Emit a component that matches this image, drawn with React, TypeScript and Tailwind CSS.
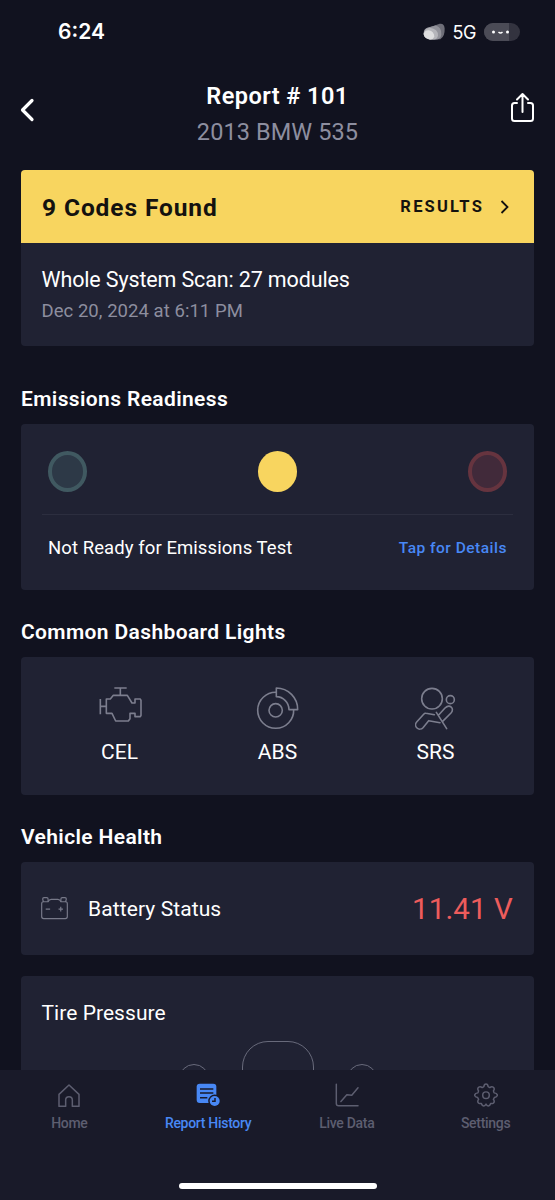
import type { ReactNode } from "react";

type NavItem = {
  label: string;
  icon: ReactNode;
  active?: boolean;
};

function EngineIcon() {
  return (
    <svg viewBox="55 49 132 114" className="h-[38px] w-[44px]" fill="none" stroke="currentColor" strokeWidth="4.8" strokeLinejoin="round">
      <path d="M104 55H141M122 55V76M62 88V134M62 110H80" />
      <path d="M80 88H92L101 77H143L157 100H166V88H182L184 92V137L182 141H166V131H151V147L146 154H108L97 131H80Z" />
    </svg>
  );
}

function BrakeIcon() {
  return (
    <svg viewBox="528 53 129 129" className="size-[43px]" fill="none" stroke="currentColor" strokeWidth="4.8" strokeLinejoin="round">
      <path d="M589 69A54 54 0 1 0 641 121" />
      <circle cx="587" cy="123" r="20" />
      <path d="M589 56A64 64 0 0 1 653 121H627A39 39 0 0 0 589 82Z" />
    </svg>
  );
}

function AirbagIcon() {
  return (
    <svg viewBox="102 51 126 129" className="h-[43px] w-[42px]" fill="none" stroke="currentColor" strokeWidth="4.8" strokeLinecap="round" strokeLinejoin="round">
      <circle cx="153" cy="86" r="31" />
      <circle cx="208" cy="89" r="12" />
      <path d="M160 134L135 130Q131 129 128 133L107 156A12 12 0 0 0 126 173L143 152L177 158" />
      <path d="M166 127L197 176M173 135L192 114C206 101 222 115 210 129L185 154" />
    </svg>
  );
}

function BatteryIcon() {
  return (
    <svg viewBox="34 37 80 68" className="h-[23px] w-[27px]" fill="none" stroke="currentColor" strokeWidth="3.5" strokeLinejoin="round">
      <path d="M41 51Q36 51 36 57V95Q36 101 42 101H106Q112 101 112 95V57Q112 51 107 51" />
      <path d="M41 51L39 43Q39 39 43 39H51Q55 39 55 43V51ZM107 51L109 43Q109 39 105 39H97Q93 39 93 43V51Z" />
      <path d="M55 51Q58 44 64 44H84Q90 44 93 51M48 73H61M86 73H99M92.500 66V80" />
    </svg>
  );
}

function HomeIcon() {
  return (
    <svg viewBox="173 67 72 72" className="size-6" fill="none" stroke="currentColor" strokeWidth="4.5" strokeLinejoin="round">
      <path d="M179 137V101L209 73L239 101V137H219V118A10 10 0 0 0 199 118V137Z" />
    </svg>
  );
}

function ReportIcon() {
  return (
    <svg viewBox="588 67 72 72" className="size-6" fill="none">
      <rect x="590" y="69" width="59" height="58" rx="9" fill="currentColor" />
      <path d="M600 85H640M600 97H640M600 111H622" stroke="#191a29" strokeWidth="4.5" />
      <circle cx="644" cy="121" r="19.500" fill="#191a29" />
      <circle cx="644" cy="121" r="15" fill="currentColor" />
      <path d="M645 112V122H636" stroke="#191a29" strokeWidth="4.5" />
    </svg>
  );
}

function ChartIcon() {
  return (
    <svg viewBox="165 68 73 72" className="size-6" fill="none" stroke="currentColor" strokeWidth="4.5" strokeLinecap="round" strokeLinejoin="round">
      <path d="M169 71V130Q169 137 176 137H235M183 124L201 103L216 105L235 82" />
    </svg>
  );
}

function GearIcon() {
  return (
    <svg viewBox="581 68 73 73" className="size-6" fill="none" stroke="currentColor" strokeWidth="4.5" strokeLinejoin="round">
      <circle cx="617.500" cy="105" r="10" />
      <path d="M611 79Q612 71 617.500 71Q623 71 624 79L629 82Q635 77 640 81Q645 86 640 92L642 98Q652 99 652 105Q652 110 643 112L640 118Q645 125 640 129Q636 131 632 130Q629 138 625 138Q621 138 617.500 132Q614 138 610 138Q606 138 603 130Q599 131 595 129Q590 125 595 118L592 112Q583 110 583 105Q583 99 593 98L595 92Q590 86 595 81Q600 77 606 82Z" />
    </svg>
  );
}

function StatusBar() {
  return (
    <div className="flex h-[63px] items-center justify-between pr-[35px] pl-[58px] text-white">
      <span className="pt-px font-[Inter] text-[21px] font-semibold">6:24</span>
      <div className="flex items-center">
        <svg viewBox="0 0 66 50" className="mr-2 h-[17px] w-[22px]">
          <path d="M2 32Q0 15 20 12L50 2Q64 0 65 16Q66 40 52 48L20 49Q4 46 2 32Z" fill="#6e6e78" />
          <path d="M2 32Q2 14 18 12L38 7Q56 12 55 34Q53 48 42 49H20Q4 46 2 32Z" fill="#92929a" />
          <path d="M2 32Q4 16 20 14Q46 17 45 38Q42 49 34 49H20Q4 46 2 32Z" fill="#b5b5ba" />
          <path d="M2 34Q4 21 17 21Q34 24 34 41Q31 49 22 49Q4 46 2 34Z" fill="#dededf" />
        </svg>
        <span className="pt-px font-[Inter] text-[18px] tracking-tight">5G</span>
        <span className="ml-2 flex h-[18px] w-[36px] items-center overflow-hidden rounded-full bg-[#33333f]">
          <svg viewBox="0 0 36 18" className="h-full w-full">
            <path d="M0 0H25V18H0Z" fill="#4b4b56" />
            <circle cx="9.500" cy="9" r="1.500" fill="#fff" />
            <circle cx="23.500" cy="9" r="1.500" fill="#fff" />
            <path d="M14.500 9Q16.500 11 18.500 9" fill="none" stroke="#fff" strokeWidth="1.400" />
          </svg>
        </span>
      </div>
    </div>
  );
}

function SectionTitle({ children }: { children: ReactNode }) {
  return <h2 className="text-[21px] leading-6 font-semibold tracking-[0.37px] text-white">{children}</h2>;
}

const lights = [
  { label: "CEL", icon: <EngineIcon /> },
  { label: "ABS", icon: <BrakeIcon /> },
  { label: "SRS", icon: <AirbagIcon /> },
];

const navItems: NavItem[] = [
  { label: "Home", icon: <HomeIcon /> },
  { label: "Report History", icon: <ReportIcon />, active: true },
  { label: "Live Data", icon: <ChartIcon /> },
  { label: "Settings", icon: <GearIcon /> },
];

export default function App() {
  return (
    <div className="flex h-[1200px] w-[555px] flex-col overflow-hidden bg-[#11121f] font-[Roboto,sans-serif] text-white">
      <StatusBar />

      <header className="flex h-[107px] shrink-0 justify-between px-[20px]">
        <button className="mt-[35px] h-6 w-[26px]" aria-label="Back">
          <svg viewBox="0 0 26 24" className="h-6 w-[26px]" fill="none" stroke="currentColor" strokeWidth="3.2" strokeLinecap="round" strokeLinejoin="round">
            <path d="M12 2.500L2.500 12L12 21.500" />
          </svg>
        </button>
        <div className="mt-[18px] text-center">
          <h1 className="text-[23.5px] leading-[30px] font-semibold tracking-[0.45px]">Report # 101</h1>
          <p className="mt-[6px] text-[23.5px] leading-[30px] tracking-[0.1px] text-[#8d8e9f]">2013 BMW 535</p>
        </div>
        <button className="mt-[28px] h-8 w-[26px]" aria-label="Share">
          <svg viewBox="0 0 26 32" className="h-8 w-[26px]" fill="none" stroke="currentColor" strokeWidth="2" strokeLinecap="round" strokeLinejoin="round">
            <path d="M8 12H5.500Q3 12 3 14.500V27.500Q3 30 5.500 30H21.500Q24 30 24 27.500V14.500Q24 12 21.500 12H19M13.500 21V3M8 8.500L13.500 3L19 8.500" />
          </svg>
        </button>
      </header>

      <main className="flex h-[900px] shrink-0 flex-col overflow-hidden px-[21px]">
        <section className="h-[176px] shrink-0 overflow-hidden rounded-[4px] bg-[#202233]">
          <div className="flex h-[72.5px] items-center justify-between bg-[#f8d55f] pt-[2px] pr-[24px] pl-[21px] text-[#14120f]">
            <span className="pt-[2px] text-[24.5px] font-bold tracking-[0.9px]">9 Codes Found</span>
            <span className="flex items-center text-[16.5px] font-bold tracking-[2.2px]">
              RESULTS
              <svg viewBox="0 0 12 16" className="ml-[14px] h-4 w-3" fill="none" stroke="currentColor" strokeWidth="1.800">
                <path d="M3.500 2L9.500 8L3.500 14" />
              </svg>
            </span>
          </div>
          <div className="px-[20.5px] pt-[23.5px]">
            <p className="text-[21.5px] leading-7 tracking-[-0.14px]">Whole System Scan: 27 modules</p>
            <p className="mt-[5px] text-[18.5px] leading-6 tracking-[0.05px] text-[#8d8e9f]">Dec 20, 2024 at 6:11 PM</p>
          </div>
        </section>

        <div className="mt-[41px]">
          <SectionTitle>Emissions Readiness</SectionTitle>
        </div>
        <section className="mt-[13px] h-[166px] shrink-0 rounded-[4px] bg-[#202233] px-[21px]">
          <div className="flex h-[91px] items-end justify-between border-b border-[#2c2e3f] px-[6px] pb-[22.5px]">
            <span className="h-[40.5px] w-[39px] rounded-[50%] border-4 border-[#405961] bg-[#2d3947]" />
            <span className="h-[40.5px] w-[39px] rounded-[50%] bg-[#f8d55f]" />
            <span className="h-[40.5px] w-[39px] rounded-[50%] border-4 border-[#66343f] bg-[#412a3a]" />
          </div>
          <div className="mt-[21px] flex items-center justify-between px-[6px]">
            <span className="text-[18.5px] leading-6 tracking-[0.08px]">Not Ready for Emissions Test</span>
            <span className="text-[15.5px] leading-6 font-medium tracking-[0.5px] text-[#4888f5]">Tap for Details</span>
          </div>
        </section>

        <div className="mt-[30px]">
          <SectionTitle>Common Dashboard Lights</SectionTitle>
        </div>
        <section className="mt-[13px] flex h-[138px] shrink-0 justify-between rounded-[4px] bg-[#202233] px-[20px] pt-[29px]">
          {lights.map((l) => (
            <div key={l.label} className="flex w-[157px] flex-col items-center">
              <div className={`flex h-[44px] text-[#7c7e8e] ${l.label === "CEL" ? "items-start" : "items-center"}`}>{l.icon}</div>
              <span className="mt-[8px] text-[21px] leading-7">{l.label}</span>
            </div>
          ))}
        </section>

        <div className="mt-[30px]">
          <SectionTitle>Vehicle Health</SectionTitle>
        </div>
        <section className="mt-[13px] flex h-[93px] shrink-0 items-center rounded-[4px] bg-[#202233] pr-[21px] pl-[20px]">
          <span className="text-[#777989]">
            <BatteryIcon />
          </span>
          <span className="ml-5 pt-[3px] text-[21px] tracking-[0.1px]">Battery Status</span>
          <span className="ml-auto pt-[2px] text-[29.5px] tracking-[0.1px] text-[#ed5c5c]">11.41 V</span>
        </section>

        <section className="mt-[21px] h-[300px] shrink-0 rounded-[4px] bg-[#202233] pt-[23px]">
          <p className="pl-[20.5px] text-[21px] leading-7 tracking-[0.05px]">Tire Pressure</p>
          <div className="mt-[14px] flex justify-center gap-[33px] text-[#686a7b]">
            <div className="mt-[23px] h-12 w-[30px] rounded-full border border-current" />
            <div className="h-[200px] w-[72px] rounded-[26px] border border-current" />
            <div className="mt-[23px] h-12 w-[30px] rounded-full border border-current" />
          </div>
        </section>
      </main>

      <footer className="flex h-[130px] shrink-0 flex-col bg-[#191a29]">
        <nav className="grid h-[113px] grid-cols-4 pt-[13px]">
          {navItems.map((item) => (
            <div
              key={item.label}
              className={`flex flex-col items-center ${item.active ? "text-[#4888f5]" : "text-[#5d5e70]"}`}
            >
              {item.icon}
              <span className="mt-[6px] text-[14px] leading-5 font-medium tracking-[-0.3px]">{item.label}</span>
            </div>
          ))}
        </nav>
        <div className="mx-auto h-[6px] w-[198px] rounded-full bg-white" />
      </footer>
    </div>
  );
}
